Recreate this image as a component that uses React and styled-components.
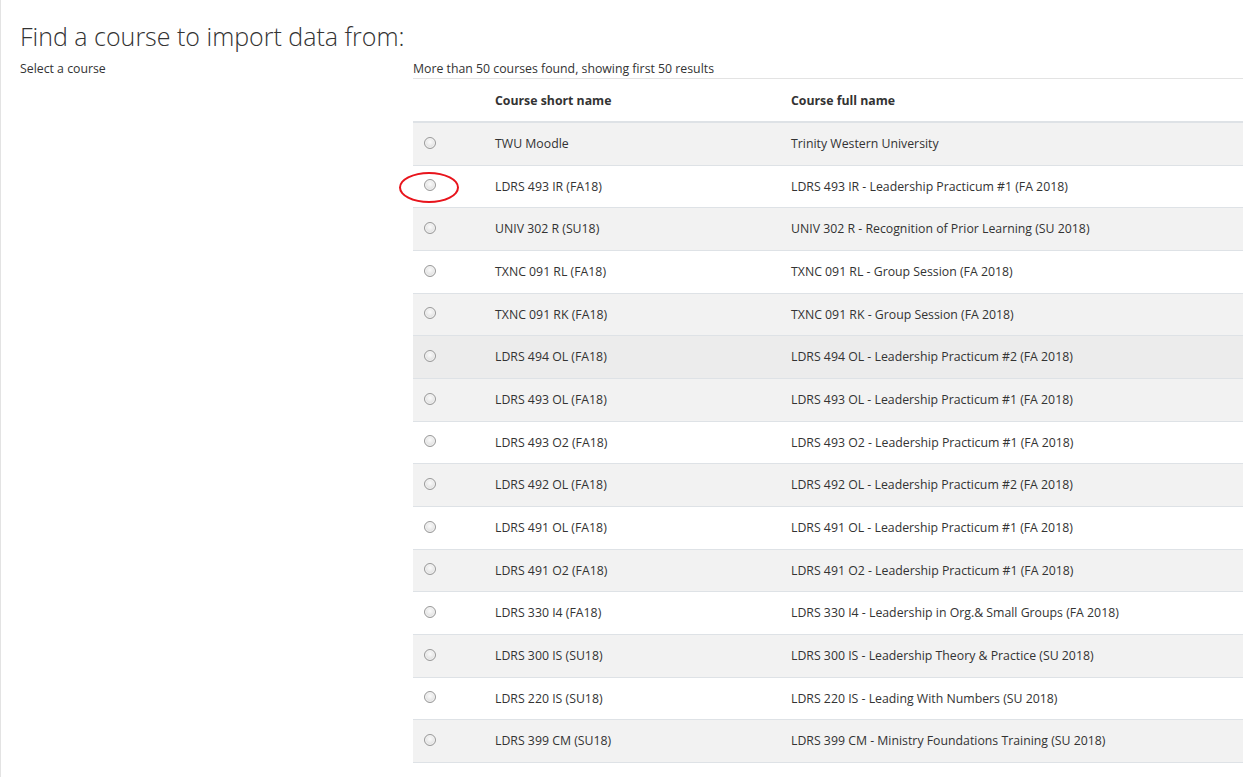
import React from "react";
import styled, { createGlobalStyle } from "styled-components";

const courses = [
  ["TWU Moodle", "Trinity Western University"],
  ["LDRS 493 IR (FA18)", "LDRS 493 IR - Leadership Practicum #1 (FA 2018)"],
  ["UNIV 302 R (SU18)", "UNIV 302 R - Recognition of Prior Learning (SU 2018)"],
  ["TXNC 091 RL (FA18)", "TXNC 091 RL - Group Session (FA 2018)"],
  ["TXNC 091 RK (FA18)", "TXNC 091 RK - Group Session (FA 2018)"],
  ["LDRS 494 OL (FA18)", "LDRS 494 OL - Leadership Practicum #2 (FA 2018)"],
  ["LDRS 493 OL (FA18)", "LDRS 493 OL - Leadership Practicum #1 (FA 2018)"],
  ["LDRS 493 O2 (FA18)", "LDRS 493 O2 - Leadership Practicum #1 (FA 2018)"],
  ["LDRS 492 OL (FA18)", "LDRS 492 OL - Leadership Practicum #2 (FA 2018)"],
  ["LDRS 491 OL (FA18)", "LDRS 491 OL - Leadership Practicum #1 (FA 2018)"],
  ["LDRS 491 O2 (FA18)", "LDRS 491 O2 - Leadership Practicum #1 (FA 2018)"],
  ["LDRS 330 I4 (FA18)", "LDRS 330 I4 - Leadership in Org.& Small Groups (FA 2018)"],
  ["LDRS 300 IS (SU18)", "LDRS 300 IS - Leadership Theory & Practice (SU 2018)"],
  ["LDRS 220 IS (SU18)", "LDRS 220 IS - Leading With Numbers (SU 2018)"],
  ["LDRS 399 CM (SU18)", "LDRS 399 CM - Ministry Foundations Training (SU 2018)"],
  ["", ""],
];

const GlobalStyle = createGlobalStyle`
  html, body {
    margin: 0;
    background: #fff;
    overflow: hidden;
  }
  body {
    font-family: "Open Sans", "Noto Sans", sans-serif;
    color: #333;
  }
`;

const App = () => {
  return (
    <>
      <GlobalStyle />
      <Page>
        <Heading>Find a course to import data from:</Heading>
        <FormRow>
          <Label>Select a course</Label>
          <Results>
            <Count>More than 50 courses found, showing first 50 results</Count>
            <Table>
              <thead>
                <tr>
                  <Th />
                  <Th>Course short name</Th>
                  <Th>Course full name</Th>
                </tr>
              </thead>
              <tbody>
                {courses.map(([short, full], i) => (
                  <Row key={i} $odd={i % 2 === 0} $hover={i === 5}>
                    <Td>
                      <RadioWrap>
                        <Radio type="radio" name="importid" />
                        {i === 1 && <Marker />}
                      </RadioWrap>
                    </Td>
                    <Td>{short}</Td>
                    <Td>{full}</Td>
                  </Row>
                ))}
              </tbody>
            </Table>
          </Results>
        </FormRow>
      </Page>
    </>
  );
};

const Page = styled.div`
  min-height: 777px;
  border-left: 1px solid #e3e3e3;
  padding: 18px 0 0 19px;
  box-sizing: border-box;
`;

const Heading = styled.h2`
  margin: 0 0 6px 0;
  font-weight: 300;
  font-size: 25px;
  line-height: 36px;
  color: #333;
`;

const FormRow = styled.div`
  display: grid;
  grid-template-columns: 393px 1fr;
`;

const Label = styled.div`
  font-size: 12.3px;
  line-height: 16px;
  padding-top: 1px;
`;

const Results = styled.div`
  min-width: 0;
`;

const Count = styled.div`
  font-size: 12.3px;
  line-height: 16px;
  padding-top: 1px;
  padding-bottom: 1px;
  border-bottom: 1px solid #e3e3e3;
`;

const Table = styled.table`
  width: 100%;
  border-collapse: collapse;
  font-size: 12.3px;
  tbody tr:first-child td {
    border-top: 2px solid #dee2e6;
  }
`;

const Th = styled.th`
  text-align: left;
  font-weight: 700;
  padding: 13px 12px 11px 12px;
  line-height: 18px;
  &:first-child {
    width: 46px;
  }
  &:nth-child(2) {
    width: 272px;
  }
`;

const Row = styled.tr`
  background: ${(p) => (p.$hover ? "#ececec" : p.$odd ? "#f2f2f2" : "#fff")};
`;

const Td = styled.td`
  border-top: 1px solid #dee2e6;
  padding: 12px;
  line-height: 17.67px;
  vertical-align: middle;
  white-space: nowrap;
`;

const RadioWrap = styled.span`
  position: relative;
  display: inline-block;
  vertical-align: middle;
  left: -1px;
  top: -2px;
`;

const Radio = styled.input`
  appearance: none;
  margin: 0;
  display: block;
  width: 12px;
  height: 12px;
  border-radius: 50%;
  border: 1px solid #9a9a9a;
  box-sizing: border-box;
  background: radial-gradient(circle at 50% 40%, #fbfbfb 0%, #e6e6e6 55%, #cfcfcf 100%);
  box-shadow: inset 0 0 0 1px #f4f4f4;
`;

const Marker = styled.span`
  position: absolute;
  box-sizing: border-box;
  left: -25px;
  top: -7px;
  width: 60px;
  height: 31px;
  border: 2.5px solid #e8141c;
  border-radius: 50%;
  pointer-events: none;
`;

export default App;
